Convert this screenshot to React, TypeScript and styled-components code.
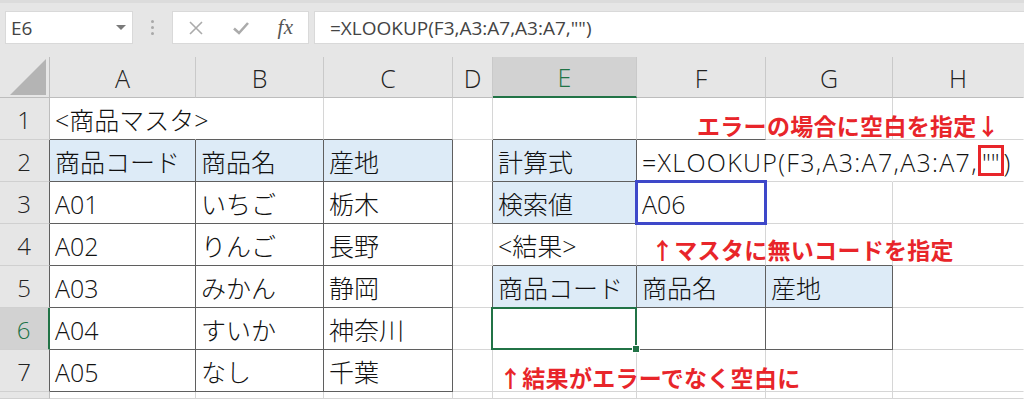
import React from "react";
import styled, { createGlobalStyle, css } from "styled-components";

const GlobalStyle = createGlobalStyle`
  html, body { margin: 0; padding: 0; background: #ffffff; }
  body {
    width: 1024px; height: 399px; overflow: hidden;
    font-family: "Open Sans", "Noto Sans CJK JP", sans-serif;
  }
`;

const GREEN = "#217346";
const GRID = "#d6d6d6";
const DARK = "#5f5f5f";
const HEAD_LINE = "#bdbdbd";
const RED = "#e8252a";

const Page = styled.div`
  position: relative;
  width: 1024px;
  height: 399px;
  overflow: hidden;
  display: flex;
  flex-direction: column;
`;

const TopBar = styled.div`
  box-sizing: border-box;
  height: 57px;
  background: #e6e6e6;
  border-top: 3px solid #dcdcdc;
  padding: 8px 0 0 5px;
  display: flex;
  align-items: flex-start;
`;

const Field = styled.div`
  box-sizing: border-box;
  height: 33px;
  background: #ffffff;
  border: 1px solid #d9d9d9;
  display: flex;
  align-items: center;
`;

const NameBox = styled(Field)`
  width: 128px;
  padding: 0 6px 0 5px;
  justify-content: space-between;
  font-size: 19px;
  color: #444;
`;

const Caret = styled.span`
  width: 0;
  height: 0;
  border-left: 5px solid transparent;
  border-right: 5px solid transparent;
  border-top: 5px solid #7a7a7a;
`;

const Grip = styled.div`
  width: 39px;
  height: 33px;
  display: flex;
  flex-direction: column;
  align-items: center;
  justify-content: center;
  gap: 3px;
`;

const Dot = styled.span`
  width: 3px;
  height: 3px;
  border-radius: 50%;
  background: #a9a9a9;
`;

const ButtonBox = styled(Field)`
  width: 137px;
  display: grid;
  grid-template-columns: repeat(3, 1fr);
  place-items: center;
`;

const Fx = styled.span`
  font-family: "Liberation Serif", "DejaVu Serif", serif;
  font-style: italic;
  font-size: 21px;
  color: #555;
  letter-spacing: 0.5px;
`;

const FormulaInput = styled(Field)`
  flex: 1;
  margin-left: 5px;
  border-right: none;
  padding-left: 15px;
  font-size: 19px;
  color: #444;
  white-space: nowrap;
`;

const Sheet = styled.div`
  display: grid;
  grid-template-columns: 50px 146px 128px 129px 40px 144px 129px 127px 1fr;
  grid-template-rows: 41px repeat(7, 42px) 1fr;
  flex: 1;
`;

const Corner = styled.div`
  box-sizing: border-box;
  background: #e6e6e6;
  border-right: 1px solid ${HEAD_LINE};
  border-bottom: 1px solid ${HEAD_LINE};
  display: flex;
  align-items: flex-end;
  justify-content: flex-end;
  padding: 0 3px 2px 0;
`;

const ColHead = styled.div<{ $active?: boolean; $last?: boolean }>`
  box-sizing: border-box;
  display: flex;
  align-items: center;
  justify-content: center;
  padding-top: 2px;
  font-size: 25px;
  font-weight: 300;
  line-height: 1;
  background: ${(p) => (p.$active ? "#d2d2d2" : "#e6e6e6")};
  color: ${(p) => (p.$active ? GREEN : "#222")};
  border-right: 1px solid ${(p) => (p.$last ? "transparent" : "#c9c9c9")};
  border-bottom: ${(p) => (p.$active ? `2px solid ${GREEN}` : `1px solid ${HEAD_LINE}`)};
`;

const RowHead = styled.div<{ $active?: boolean; $edge: string }>`
  box-sizing: border-box;
  display: flex;
  align-items: center;
  justify-content: center;
  padding: 2px 1px 0 0;
  font-size: 24px;
  font-weight: 300;
  line-height: 1;
  background: ${(p) => (p.$active ? "#d2d2d2" : "#e6e6e6")};
  color: ${(p) => (p.$active ? GREEN : "#222")};
  border-right: ${(p) => (p.$active ? `2px solid ${GREEN}` : `1px solid ${p.$edge}`)};
  border-bottom: 1px solid #d0d0d0;
`;

const Cell = styled.div<{
  $fill?: boolean;
  $right: string;
  $bottom: string;
  $selected?: boolean;
  $picked?: boolean;
}>`
  box-sizing: border-box;
  position: relative;
  display: flex;
  align-items: center;
  padding: 3px 0 0 5px;
  white-space: nowrap;
  font-size: 25px;
  font-weight: 300;
  line-height: 1;
  color: #111;
  background: ${(p) => (p.$fill ? "#ddebf7" : "transparent")};
  border-right: 1px solid ${(p) => p.$right};
  border-bottom: 1px solid ${(p) => p.$bottom};
  ${(p) =>
    p.$picked &&
    css`
      z-index: 1;
      &::after {
        content: "";
        position: absolute;
        left: -2px;
        top: -2px;
        right: -2px;
        bottom: -2px;
        border: 3px solid #3e48c9;
      }
    `}
  ${(p) =>
    p.$selected &&
    css`
      z-index: 2;
      &::after {
        content: "";
        position: absolute;
        left: -2px;
        top: -1px;
        right: -1px;
        bottom: -1px;
        border: 2px solid ${GREEN};
      }
      &::before {
        content: "";
        position: absolute;
        right: -4px;
        bottom: -4px;
        width: 6px;
        height: 6px;
        background: ${GREEN};
        border: 1px solid #ffffff;
        z-index: 3;
      }
    `}
`;

const FormulaText = styled.span`
  display: inline-flex;
  align-items: center;
  letter-spacing: 1.3px;
`;

const Quoted = styled.span`
  box-sizing: border-box;
  display: inline-block;
  height: 31px;
  margin-top: -3px;
  padding: 1px 1px 0 1px;
  border: 3px solid ${RED};
  line-height: 26px;
  letter-spacing: 0;
`;

const Note = styled.div<{ $x: number; $y: number }>`
  position: absolute;
  left: ${(p) => p.$x}px;
  top: ${(p) => p.$y}px;
  font-family: "Noto Sans CJK JP", sans-serif;
  font-weight: 700;
  font-size: 23px;
  line-height: 1;
  letter-spacing: 0.3px;
  color: ${RED};
  white-space: nowrap;
`;

const LETTERS = ["A", "B", "C", "D", "E", "F", "G", "H"];

type Spec = { text?: React.ReactNode; fill?: boolean };

const formula = (
  <FormulaText>
    =XLOOKUP(F3,A3:A7,A3:A7,<Quoted>""</Quoted>)
  </FormulaText>
);

const data: Record<string, Spec> = {
  A1: { text: "<商品マスタ>" },
  A2: { text: "商品コード", fill: true },
  B2: { text: "商品名", fill: true },
  C2: { text: "産地", fill: true },
  A3: { text: "A01" },
  B3: { text: "いちご" },
  C3: { text: "栃木" },
  A4: { text: "A02" },
  B4: { text: "りんご" },
  C4: { text: "長野" },
  A5: { text: "A03" },
  B5: { text: "みかん" },
  C5: { text: "静岡" },
  A6: { text: "A04" },
  B6: { text: "すいか" },
  C6: { text: "神奈川" },
  A7: { text: "A05" },
  B7: { text: "なし" },
  C7: { text: "千葉" },
  E2: { text: "計算式", fill: true },
  F2: { text: formula },
  E3: { text: "検索値", fill: true },
  F3: { text: "A06" },
  E4: { text: "<結果>" },
  E5: { text: "商品コード", fill: true },
  F5: { text: "商品名", fill: true },
  G5: { text: "産地", fill: true },
};

const key = (r: number, c: number) => `${LETTERS[c] ?? "?"}${r}`;

const boxed = (r: number, c: number): boolean => {
  if (c >= 0 && c <= 2 && r >= 2 && r <= 7) return true;
  if (c === 4 && (r === 2 || r === 3)) return true;
  if (c >= 4 && c <= 6 && (r === 5 || r === 6)) return true;
  return false;
};

const topRule = (r: number, c: number) => boxed(r, c) || (r === 2 && c === 5);
const hiddenRight = new Set(["A1", "F2", "G2"]);

const rightColor = (r: number, c: number) => {
  if (c === 7) return "transparent";
  if (boxed(r, c) || boxed(r, c + 1)) return DARK;
  if (hiddenRight.has(key(r, c))) return "transparent";
  return GRID;
};

const bottomColor = (r: number, c: number) => {
  if (boxed(r, c) || topRule(r + 1, c)) return DARK;
  return GRID;
};

const XIcon = () => (
  <svg width="16" height="16" viewBox="0 0 16 16">
    <path d="M2 2 L14 14 M14 2 L2 14" stroke="#ababab" strokeWidth="1.6" fill="none" />
  </svg>
);

const CheckIcon = () => (
  <svg width="18" height="16" viewBox="0 0 18 16">
    <path d="M2 8.5 L7 13 L16 3" stroke="#ababab" strokeWidth="2.6" fill="none" />
  </svg>
);

const CornerMark = () => (
  <svg width="36" height="36" viewBox="0 0 36 36">
    <polygon points="36,0 36,36 0,36" fill="#b4b4b4" />
  </svg>
);

export default function App() {
  const rows = [1, 2, 3, 4, 5, 6, 7, 8];
  return (
    <Page>
      <GlobalStyle />
      <TopBar>
        <NameBox>
          <span>E6</span>
          <Caret />
        </NameBox>
        <Grip>
          <Dot />
          <Dot />
          <Dot />
        </Grip>
        <ButtonBox>
          <XIcon />
          <CheckIcon />
          <Fx>fx</Fx>
        </ButtonBox>
        <FormulaInput>=XLOOKUP(F3,A3:A7,A3:A7,"")</FormulaInput>
      </TopBar>
      <Sheet>
        <Corner>
          <CornerMark />
        </Corner>
        {LETTERS.map((l, i) => (
          <ColHead key={l} $active={l === "E"} $last={i === 7}>
            {l}
          </ColHead>
        ))}
        {rows.map((r) => (
          <React.Fragment key={r}>
            <RowHead $active={r === 6} $edge={boxed(r, 0) ? DARK : HEAD_LINE}>
              {r <= 7 ? r : ""}
            </RowHead>
            {LETTERS.map((_, c) => {
              const spec = data[key(r, c)] ?? {};
              return (
                <Cell
                  key={c}
                  $fill={spec.fill}
                  $right={rightColor(r, c)}
                  $bottom={bottomColor(r, c)}
                  $selected={r === 6 && c === 4}
                  $picked={r === 3 && c === 5}
                >
                  {spec.text}
                </Cell>
              );
            })}
          </React.Fragment>
        ))}
      </Sheet>
      <Note $x={697} $y={114}>エラーの場合に空白を指定↓</Note>
      <Note $x={651} $y={238}>↑マスタに無いコードを指定</Note>
      <Note $x={499} $y={366}>↑結果がエラーでなく空白に</Note>
    </Page>
  );
}
